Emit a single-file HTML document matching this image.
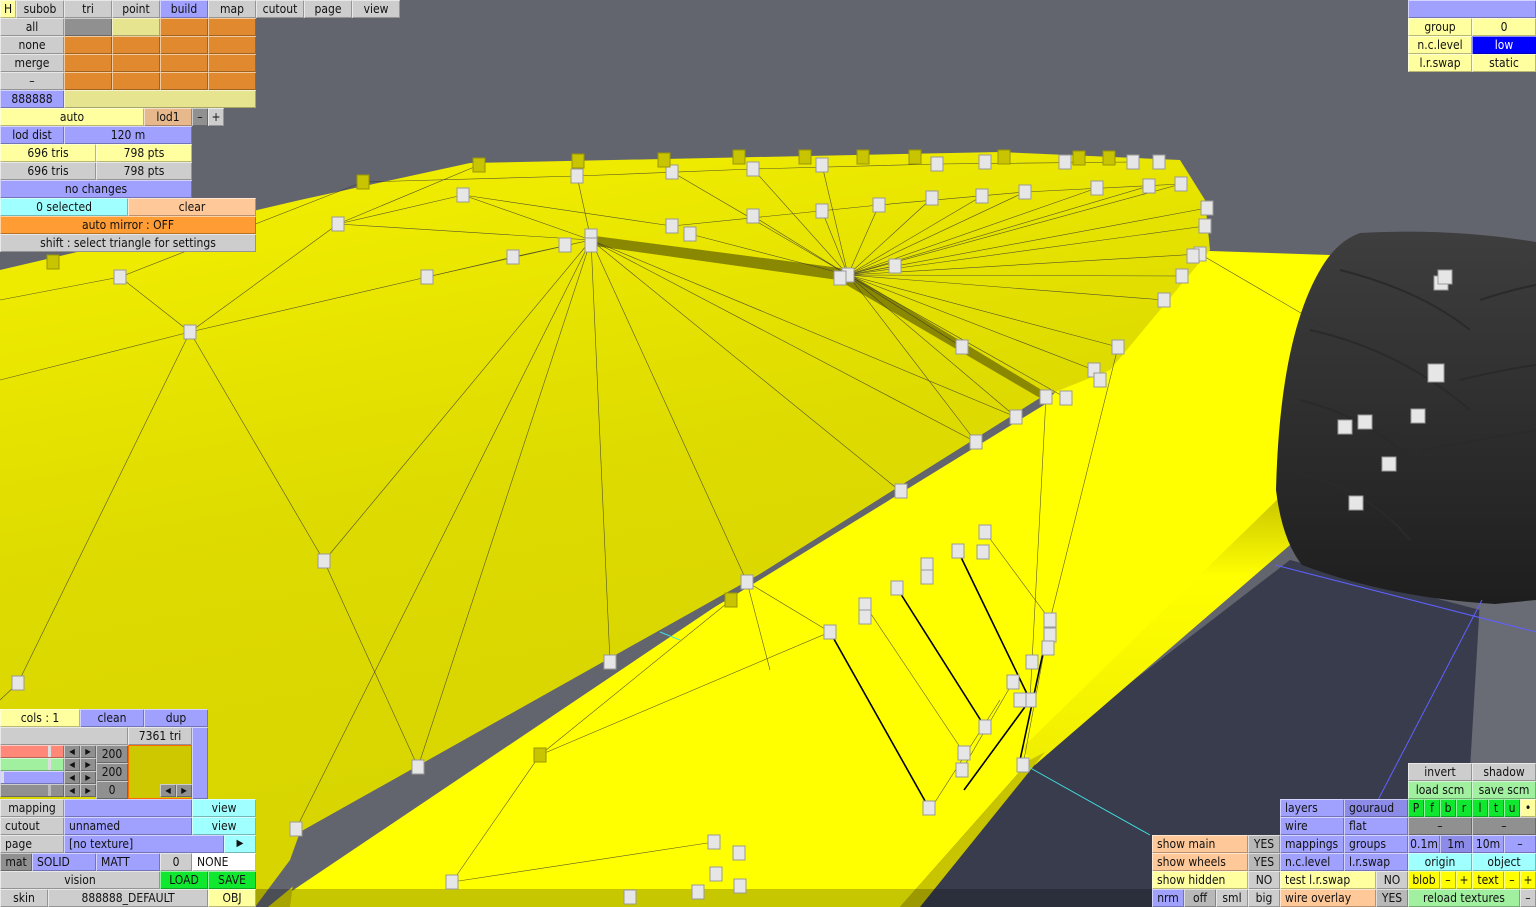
<!DOCTYPE html>
<html><head><meta charset="utf-8"><style>
*{margin:0;padding:0}
body{width:1536px;height:907px;overflow:hidden;background:#62656e;position:relative;font-family:"DejaVu Sans Condensed","DejaVu Sans","Liberation Sans",sans-serif}
svg{position:absolute;left:0;top:0}
i{position:absolute;font-style:normal;height:18px;line-height:18px;font-size:12px;text-align:center;color:#111;box-sizing:border-box;box-shadow:inset 1px 1px 0 rgba(255,255,255,.55),inset -1px -1px 0 rgba(0,0,0,.28);white-space:nowrap;overflow:hidden}
.g{background:#cdcdcd}.o{background:#e0892e}.y{background:#ffffa0}.py{background:#e6e48e}.b{background:#a0a0ff}.c{background:#a0ffff}.p{background:#ffc898}.O{background:#ff9c34}.G{background:#10e830}.lg{background:#a0f0a0}.Y{background:#ffff00}.dg{background:#909090}.w{background:#fff}.db{background:#8c8ce8}.tn{background:#e6b88c}.lo{background:#0000ff;color:#fff}.l{text-align:left;padding-left:5px}
.s{height:13px;line-height:13px;font-size:8px}
</style></head><body>
<svg width="1536" height="907" viewBox="0 0 1536 907">
<defs>
<linearGradient id="ly" x1="0" y1="0" x2="0.3" y2="1"><stop offset="0" stop-color="#f6f200"/><stop offset="0.5" stop-color="#dedb00"/><stop offset="1" stop-color="#d6d300"/></linearGradient>
<linearGradient id="wh" x1="0" y1="0" x2="0" y2="1"><stop offset="0" stop-color="#3e3e3e"/><stop offset="1" stop-color="#1e1e1e"/></linearGradient>
<linearGradient id="bs" x1="0" y1="0" x2="0" y2="1"><stop offset="0" stop-color="#c8c400"/><stop offset="0.3" stop-color="#ffff00"/><stop offset="1" stop-color="#f0ee00"/></linearGradient>
</defs>
<polygon points="1030,760 1290,560 1480,610 1470,770 1536,780 1536,907 790,907" fill="#383c4c"/>
<polygon points="1480,600 1536,600 1536,780 1470,770" fill="#6a6c75"/>
<polygon points="1180,250 1330,255 1290,500 1280,545 1030,760 900,907 268,907 740,590 1050,398" fill="#ffff00"/>
<polygon points="1282,495 1290,545 1035,765 1022,748" fill="url(#bs)"/>
<polygon points="1030,760 1045,752 920,907 900,907" fill="#c8c400"/>
<polygon points="0,270 300,200 470,163 1000,152 1180,160 1205,200 1210,250 1110,370 1040,398 760,574 300,832 290,907 0,907" fill="url(#ly)"/>
<polygon points="1040,398 1052,400 740,592 420,782 268,907 255,907 290,860 300,832 760,574" fill="#62656e"/>
<polygon points="595,236 840,268 1045,392 1040,398 838,280 595,246" fill="#8a8800"/>
<path d="M1360,233 Q1450,228 1536,242 L1536,600 L1495,604 Q1390,598 1302,565 Q1282,540 1276,490 Q1280,330 1325,262 Q1340,240 1360,233 Z" fill="url(#wh)"/>
<g stroke="#2a2a2a" stroke-width="2" fill="none">
<path d="M1340,270 Q1420,290 1470,330"/><path d="M1310,330 Q1400,350 1470,410"/><path d="M1300,400 Q1380,420 1430,480"/><path d="M1290,470 Q1370,490 1410,540"/><path d="M1480,300 Q1510,290 1536,285"/><path d="M1460,380 Q1500,370 1536,365"/><path d="M1420,450 Q1480,440 1536,430"/>
</g>
<g stroke="#6060ff" stroke-width="1"><line x1="1275" y1="565" x2="1536" y2="632"/><line x1="1482" y1="600" x2="1378" y2="800"/></g>
<g stroke="#40e0e0" stroke-width="1"><line x1="660" y1="632" x2="680" y2="640"/><line x1="1025" y1="765" x2="1150" y2="835"/></g>
<g stroke="#333" stroke-width="0.6" fill="none" opacity="0.8">
<path d="M591,240L296,829M591,240L418,767M591,240L610,662M591,240L747,582M591,240L900,491M591,240L976,442M591,240L1016,417M591,240L324,561M591,240L463,195M591,240L427,277M591,240L338,224M591,240L513,257M591,240L577,176"/>
<path d="M848,275L1207,208M848,275L1205,226M848,275L1200,254M848,275L1182,276M848,275L1164,300M848,275L1118,347M848,275L1094,370M848,275L1066,398M848,275L895,266M848,275L672,172M848,275L753,169M848,275L822,165M848,275L879,205M848,275L932,198M848,275L982,196M848,275L1025,192M848,275L1097,188M848,275L1149,186M848,275L1181,184M848,275L753,216M848,275L822,211M848,275L690,234M848,275L962,347M848,275L1016,417M848,275L976,442"/>
<path d="M190,332L18,683M190,332L324,561M190,332L120,277M190,332L338,224M190,332L427,277M190,332L0,380M120,277L363,182M120,277L0,300M338,224L463,195M338,224L479,165M463,195L672,226M672,226L879,205L1025,192L1181,184M324,561L418,767M18,683L0,700M427,277L513,257M363,182L577,176L753,169L937,164L1133,162"/>
<path d="M747,582L830,632M830,632L929,808M897,588L985,727M958,551L1030,700M985,532L1050,620M865,605L964,753M1118,347L1050,620M1050,620L1023,765M731,600L540,755M830,632L540,755M540,755L452,882M714,842L452,882M1013,682L962,770M1046,397L1030,700M1200,254L1330,330M747,582L770,670M930,810L1000,700"/>
</g>
<g stroke="#000" stroke-width="1.6"><path d="M830,632L929,808M958,551L1030,700M897,588L985,727M1030,700L964,790M1050,620L1020,760"/></g>
<rect x="256" y="889" width="896" height="18" fill="#000" opacity="0.22"/>
</svg>
<svg width="1536" height="907" viewBox="0 0 1536 907">
<g fill="#e6e6e6" stroke="#9a9a9a" stroke-width="1">
<rect x="114" y="270" width="12" height="14"/><rect x="184" y="325" width="12" height="14"/><rect x="332" y="217" width="12" height="14"/><rect x="457" y="188" width="12" height="14"/><rect x="421" y="270" width="12" height="14"/><rect x="507" y="250" width="12" height="14"/><rect x="559" y="238" width="12" height="14"/><rect x="585" y="229" width="12" height="14"/><rect x="585" y="238" width="12" height="14"/><rect x="571" y="169" width="12" height="14"/><rect x="666" y="165" width="12" height="14"/><rect x="666" y="219" width="12" height="14"/><rect x="684" y="227" width="12" height="14"/><rect x="747" y="162" width="12" height="14"/><rect x="747" y="209" width="12" height="14"/><rect x="816" y="158" width="12" height="14"/><rect x="816" y="204" width="12" height="14"/><rect x="873" y="198" width="12" height="14"/><rect x="931" y="157" width="12" height="14"/><rect x="926" y="191" width="12" height="14"/><rect x="979" y="155" width="12" height="14"/><rect x="976" y="189" width="12" height="14"/><rect x="1019" y="185" width="12" height="14"/><rect x="1059" y="155" width="12" height="14"/><rect x="1091" y="181" width="12" height="14"/><rect x="1127" y="155" width="12" height="14"/><rect x="1143" y="179" width="12" height="14"/><rect x="1153" y="155" width="12" height="14"/><rect x="1175" y="177" width="12" height="14"/><rect x="1201" y="201" width="12" height="14"/><rect x="1199" y="219" width="12" height="14"/><rect x="1194" y="247" width="12" height="14"/><rect x="1187" y="249" width="12" height="14"/><rect x="1176" y="269" width="12" height="14"/><rect x="1158" y="293" width="12" height="14"/><rect x="889" y="259" width="12" height="14"/><rect x="842" y="268" width="12" height="14"/><rect x="834" y="271" width="12" height="14"/><rect x="956" y="340" width="12" height="14"/><rect x="1112" y="340" width="12" height="14"/><rect x="1088" y="363" width="12" height="14"/><rect x="1094" y="373" width="12" height="14"/><rect x="1040" y="390" width="12" height="14"/><rect x="1060" y="391" width="12" height="14"/><rect x="1010" y="410" width="12" height="14"/><rect x="970" y="435" width="12" height="14"/><rect x="895" y="484" width="12" height="14"/><rect x="741" y="575" width="12" height="14"/><rect x="604" y="655" width="12" height="14"/><rect x="318" y="554" width="12" height="14"/><rect x="12" y="676" width="12" height="14"/><rect x="412" y="760" width="12" height="14"/><rect x="290" y="822" width="12" height="14"/><rect x="979" y="525" width="12" height="14"/><rect x="977" y="545" width="12" height="14"/><rect x="952" y="544" width="12" height="14"/><rect x="921" y="558" width="12" height="14"/><rect x="921" y="570" width="12" height="14"/><rect x="891" y="581" width="12" height="14"/><rect x="859" y="598" width="12" height="14"/><rect x="859" y="610" width="12" height="14"/><rect x="824" y="625" width="12" height="14"/><rect x="1044" y="613" width="12" height="14"/><rect x="1044" y="628" width="12" height="14"/><rect x="1042" y="641" width="12" height="14"/><rect x="1026" y="655" width="12" height="14"/><rect x="1024" y="693" width="12" height="14"/><rect x="1007" y="675" width="12" height="14"/><rect x="1014" y="693" width="12" height="14"/><rect x="979" y="720" width="12" height="14"/><rect x="958" y="746" width="12" height="14"/><rect x="956" y="763" width="12" height="14"/><rect x="923" y="801" width="12" height="14"/><rect x="1017" y="758" width="12" height="14"/><rect x="708" y="835" width="12" height="14"/><rect x="733" y="846" width="12" height="14"/><rect x="710" y="867" width="12" height="14"/><rect x="734" y="879" width="12" height="14"/><rect x="692" y="885" width="12" height="14"/><rect x="446" y="875" width="12" height="14"/><rect x="624" y="890" width="12" height="14"/><rect x="1434" y="276" width="14" height="14"/><rect x="1438" y="270" width="14" height="14"/><rect x="1428" y="364" width="16" height="18"/><rect x="1411" y="409" width="14" height="14"/><rect x="1338" y="420" width="14" height="14"/><rect x="1358" y="415" width="14" height="14"/><rect x="1382" y="457" width="14" height="14"/><rect x="1349" y="496" width="14" height="14"/>
</g>
<g fill="#c8c400" stroke="#9a9600" stroke-width="1">
<rect x="47" y="255" width="12" height="14"/><rect x="357" y="175" width="12" height="14"/><rect x="473" y="158" width="12" height="14"/><rect x="572" y="154" width="12" height="14"/><rect x="658" y="153" width="12" height="14"/><rect x="733" y="150" width="12" height="14"/><rect x="799" y="150" width="12" height="14"/><rect x="857" y="150" width="12" height="14"/><rect x="909" y="150" width="12" height="14"/><rect x="998" y="150" width="12" height="14"/><rect x="1073" y="151" width="12" height="14"/><rect x="1103" y="151" width="12" height="14"/><rect x="725" y="593" width="12" height="14"/><rect x="534" y="748" width="12" height="14"/>
</g>
</svg>

<i class="y" style="left:0;top:0;width:16px">H</i><i class="g" style="left:16px;top:0;width:48px">subob</i><i class="g" style="left:64px;top:0;width:48px">tri</i><i class="g" style="left:112px;top:0;width:48px">point</i><i class="b" style="left:160px;top:0;width:48px">build</i><i class="g" style="left:208px;top:0;width:48px">map</i><i class="g" style="left:256px;top:0;width:48px">cutout</i><i class="g" style="left:304px;top:0;width:48px">page</i><i class="g" style="left:352px;top:0;width:48px">view</i>
<i class="g" style="left:0;top:18px;width:64px">all</i><i class="dg" style="left:64px;top:18px;width:48px"></i><i class="py" style="left:112px;top:18px;width:48px"></i><i class="o" style="left:160px;top:18px;width:48px"></i><i class="o" style="left:208px;top:18px;width:48px"></i>
<i class="g" style="left:0;top:36px;width:64px">none</i><i class="o" style="left:64px;top:36px;width:48px"></i><i class="o" style="left:112px;top:36px;width:48px"></i><i class="o" style="left:160px;top:36px;width:48px"></i><i class="o" style="left:208px;top:36px;width:48px"></i>
<i class="g" style="left:0;top:54px;width:64px">merge</i><i class="o" style="left:64px;top:54px;width:48px"></i><i class="o" style="left:112px;top:54px;width:48px"></i><i class="o" style="left:160px;top:54px;width:48px"></i><i class="o" style="left:208px;top:54px;width:48px"></i>
<i class="g" style="left:0;top:72px;width:64px">–</i><i class="o" style="left:64px;top:72px;width:48px"></i><i class="o" style="left:112px;top:72px;width:48px"></i><i class="o" style="left:160px;top:72px;width:48px"></i><i class="o" style="left:208px;top:72px;width:48px"></i>
<i class="b" style="left:0;top:90px;width:64px">888888</i><i class="py" style="left:64px;top:90px;width:192px"></i>
<i class="y" style="left:0;top:108px;width:144px">auto</i><i class="tn" style="left:144px;top:108px;width:48px">lod1</i><i class="dg" style="left:192px;top:108px;width:16px">–</i><i class="g" style="left:208px;top:108px;width:16px">+</i>
<i class="b" style="left:0;top:126px;width:64px">lod dist</i><i class="b" style="left:64px;top:126px;width:128px">120 m</i>
<i class="y" style="left:0;top:144px;width:96px">696 tris</i><i class="y" style="left:96px;top:144px;width:96px">798 pts</i>
<i class="g" style="left:0;top:162px;width:96px">696 tris</i><i class="g" style="left:96px;top:162px;width:96px">798 pts</i>
<i class="b" style="left:0;top:180px;width:192px">no changes</i>
<i class="c" style="left:0;top:198px;width:128px">0 selected</i><i class="p" style="left:128px;top:198px;width:128px">clear</i>
<i class="O" style="left:0;top:216px;width:256px">auto mirror : OFF</i>
<i class="g" style="left:0;top:234px;width:256px">shift : select triangle for settings</i>

<i class="b" style="left:1408px;top:0;width:128px"></i>
<i class="y" style="left:1408px;top:18px;width:64px">group</i><i class="y" style="left:1472px;top:18px;width:64px">0</i>
<i class="y" style="left:1408px;top:36px;width:64px">n.c.level</i><i class="lo" style="left:1472px;top:36px;width:64px">low</i>
<i class="y" style="left:1408px;top:54px;width:64px">l.r.swap</i><i class="y" style="left:1472px;top:54px;width:64px">static</i>

<i class="y" style="left:0;top:709px;width:80px">cols : 1</i><i class="b" style="left:80px;top:709px;width:64px">clean</i><i class="b" style="left:144px;top:709px;width:64px">dup</i>
<i class="g" style="left:0;top:727px;width:128px"></i><i class="g" style="left:128px;top:727px;width:64px">7361 tri</i><i class="b" style="left:192px;top:727px;width:16px;height:72px"></i>
<i class="s" style="left:0;top:745px;width:64px;background:#ff8878"></i><i class="s" style="left:0;top:758px;width:64px;background:#a0f0a0"></i><i class="s" style="left:0;top:771px;width:64px;background:#a0a0ff"></i><i class="s dg" style="left:0;top:784px;width:64px"></i>
<i style="left:48px;top:746px;width:3px;height:11px;background:#ddd;box-shadow:none"></i><i style="left:48px;top:759px;width:3px;height:11px;background:#ddd;box-shadow:none"></i><i style="left:1px;top:772px;width:3px;height:11px;background:#ddd;box-shadow:none"></i><i style="left:48px;top:785px;width:3px;height:11px;background:#bbb;box-shadow:none"></i>
<i class="s dg" style="left:64px;top:745px;width:16px">◀</i><i class="s dg" style="left:80px;top:745px;width:16px">▶</i>
<i class="s dg" style="left:64px;top:758px;width:16px">◀</i><i class="s dg" style="left:80px;top:758px;width:16px">▶</i>
<i class="s dg" style="left:64px;top:771px;width:16px">◀</i><i class="s dg" style="left:80px;top:771px;width:16px">▶</i>
<i class="s dg" style="left:64px;top:784px;width:16px">◀</i><i class="s dg" style="left:80px;top:784px;width:16px">▶</i>
<i class="dg" style="left:96px;top:745px;width:32px">200</i><i class="dg" style="left:96px;top:763px;width:32px">200</i><i class="dg" style="left:96px;top:781px;width:32px">0</i>
<i style="left:128px;top:745px;width:64px;height:54px;background:#cdc800;border:1px solid #ff6a00;box-shadow:none"></i>
<i class="s dg" style="left:160px;top:784px;width:16px">◀</i><i class="s dg" style="left:176px;top:784px;width:16px">▶</i>
<i class="g" style="left:0;top:799px;width:64px">mapping</i><i class="b" style="left:64px;top:799px;width:128px"></i><i class="c" style="left:192px;top:799px;width:64px">view</i>
<i class="g l" style="left:0;top:817px;width:64px">cutout</i><i class="b l" style="left:64px;top:817px;width:128px">unnamed</i><i class="c" style="left:192px;top:817px;width:64px">view</i>
<i class="g l" style="left:0;top:835px;width:64px">page</i><i class="b l" style="left:64px;top:835px;width:160px">[no texture]</i><i class="c" style="left:224px;top:835px;width:32px;font-size:10px">▶</i>
<i class="dg" style="left:0;top:853px;width:32px">mat</i><i class="b l" style="left:32px;top:853px;width:64px">SOLID</i><i class="b l" style="left:96px;top:853px;width:64px">MATT</i><i class="g" style="left:160px;top:853px;width:32px">0</i><i class="w l" style="left:192px;top:853px;width:64px">NONE</i>
<i class="g" style="left:0;top:871px;width:160px">vision</i><i class="G" style="left:160px;top:871px;width:48px">LOAD</i><i class="G" style="left:208px;top:871px;width:48px">SAVE</i>
<i class="g" style="left:0;top:889px;width:48px">skin</i><i class="g" style="left:48px;top:889px;width:160px">888888_DEFAULT</i><i class="y" style="left:208px;top:889px;width:48px">OBJ</i>

<i class="g" style="left:1408px;top:763px;width:64px">invert</i><i class="g" style="left:1472px;top:763px;width:64px">shadow</i>
<i class="lg" style="left:1408px;top:781px;width:64px">load scm</i><i class="lg" style="left:1472px;top:781px;width:64px">save scm</i>
<i class="b l" style="left:1280px;top:799px;width:64px">layers</i><i class="db l" style="left:1344px;top:799px;width:64px">gouraud</i>
<i class="G" style="left:1408px;top:799px;width:16px">P</i><i class="G" style="left:1424px;top:799px;width:16px">f</i><i class="G" style="left:1440px;top:799px;width:16px">b</i><i class="G" style="left:1456px;top:799px;width:16px">r</i><i class="G" style="left:1472px;top:799px;width:16px">l</i><i class="G" style="left:1488px;top:799px;width:16px">t</i><i class="G" style="left:1504px;top:799px;width:16px">u</i><i class="y" style="left:1520px;top:799px;width:16px">•</i>
<i class="b l" style="left:1280px;top:817px;width:64px">wire</i><i class="b l" style="left:1344px;top:817px;width:64px">flat</i><i class="dg" style="left:1408px;top:817px;width:64px">–</i><i class="dg" style="left:1472px;top:817px;width:64px">–</i>
<i class="p l" style="left:1152px;top:835px;width:96px">show main</i><i class="dg" style="left:1248px;top:835px;width:32px;background:#b8b8b8">YES</i><i class="b l" style="left:1280px;top:835px;width:64px">mappings</i><i class="b l" style="left:1344px;top:835px;width:64px">groups</i><i class="b" style="left:1408px;top:835px;width:32px">0.1m</i><i class="db" style="left:1440px;top:835px;width:32px">1m</i><i class="b" style="left:1472px;top:835px;width:32px">10m</i><i class="b" style="left:1504px;top:835px;width:32px">–</i>
<i class="p l" style="left:1152px;top:853px;width:96px">show wheels</i><i class="dg" style="left:1248px;top:853px;width:32px;background:#b8b8b8">YES</i><i class="b l" style="left:1280px;top:853px;width:64px">n.c.level</i><i class="b l" style="left:1344px;top:853px;width:64px">l.r.swap</i><i class="c" style="left:1408px;top:853px;width:64px">origin</i><i class="c" style="left:1472px;top:853px;width:64px">object</i>
<i class="y l" style="left:1152px;top:871px;width:96px">show hidden</i><i class="g" style="left:1248px;top:871px;width:32px">NO</i><i class="y l" style="left:1280px;top:871px;width:96px">test l.r.swap</i><i class="g" style="left:1376px;top:871px;width:32px">NO</i><i class="Y" style="left:1408px;top:871px;width:32px">blob</i><i class="Y" style="left:1440px;top:871px;width:16px">–</i><i class="Y" style="left:1456px;top:871px;width:16px">+</i><i class="Y" style="left:1472px;top:871px;width:32px">text</i><i class="Y" style="left:1504px;top:871px;width:16px">–</i><i class="Y" style="left:1520px;top:871px;width:16px">+</i>
<i class="b" style="left:1152px;top:889px;width:32px">nrm</i><i class="dg" style="left:1184px;top:889px;width:32px;background:#b8b8b8">off</i><i class="g" style="left:1216px;top:889px;width:32px">sml</i><i class="g" style="left:1248px;top:889px;width:32px">big</i><i class="p l" style="left:1280px;top:889px;width:96px">wire overlay</i><i class="dg" style="left:1376px;top:889px;width:32px;background:#b8b8b8">YES</i><i class="lg" style="left:1408px;top:889px;width:112px">reload textures</i><i class="g" style="left:1520px;top:889px;width:16px">–</i>
</body></html>
